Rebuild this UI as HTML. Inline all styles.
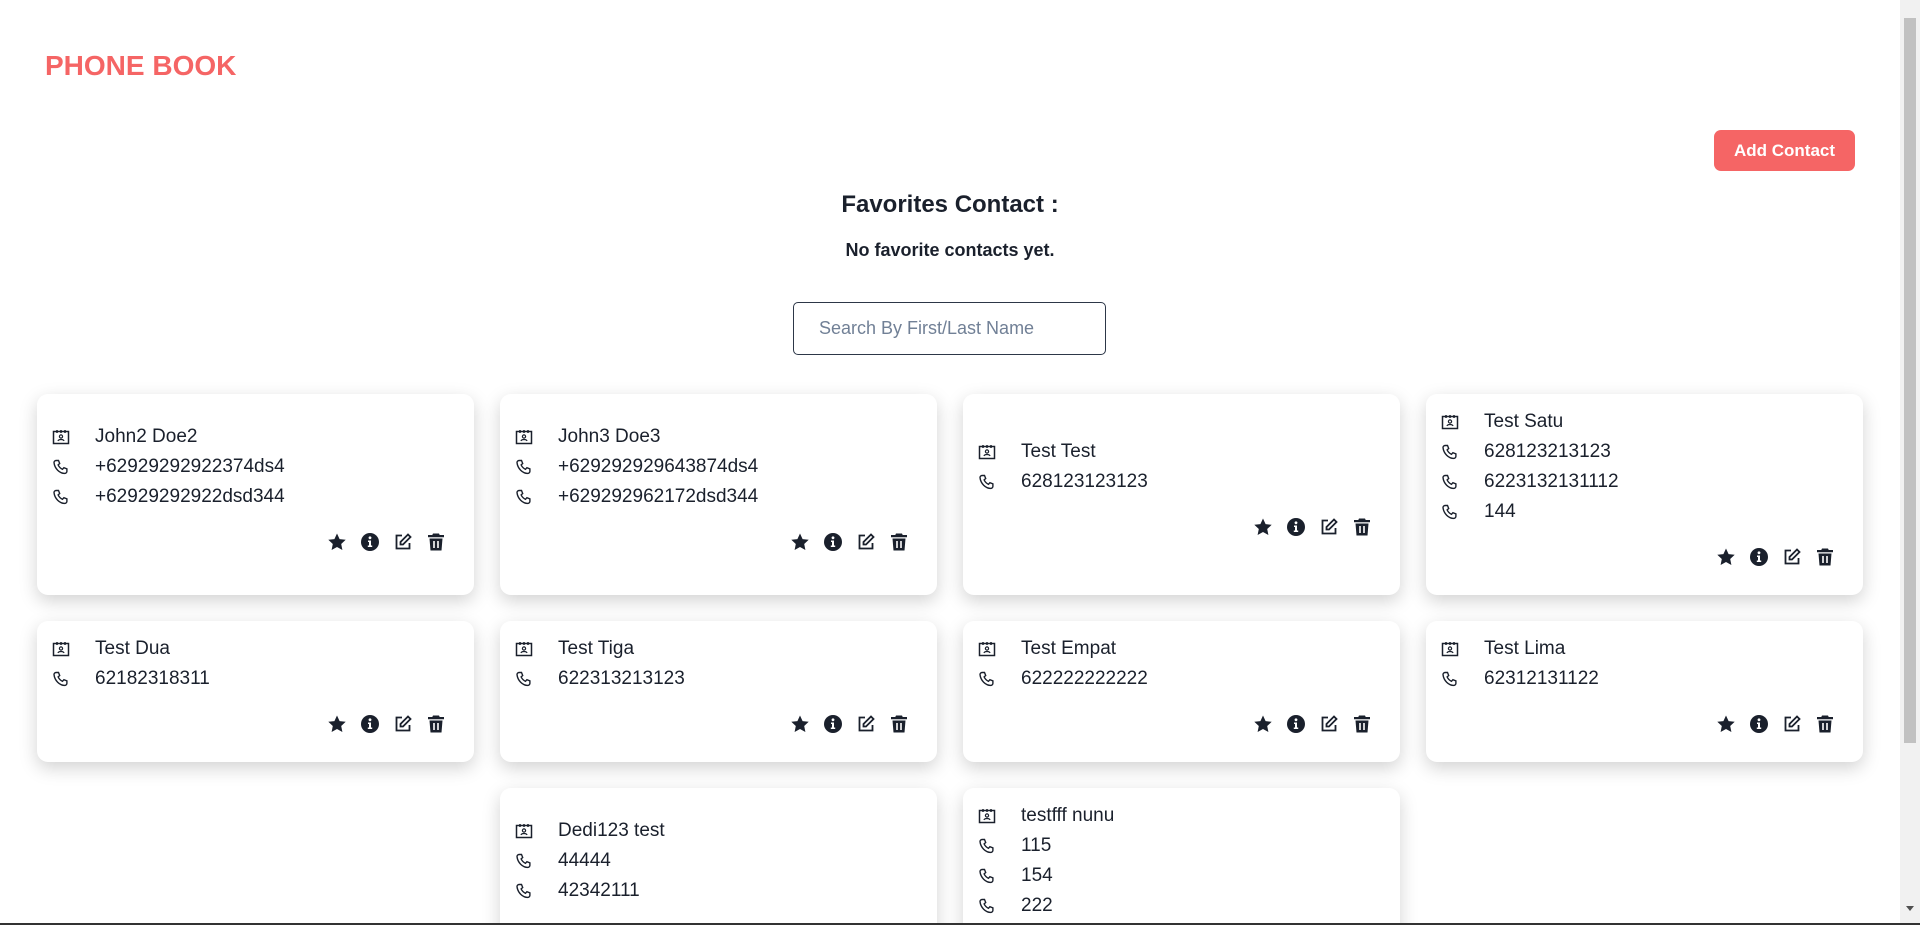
<!DOCTYPE html>
<html><head><meta charset="utf-8"><style>
*{box-sizing:border-box;margin:0;padding:0}
html,body{width:1920px;height:925px;overflow:hidden;background:#fff;font-family:"Liberation Sans",sans-serif;color:#1a202c}
#pg{position:relative;width:1920px;height:925px;overflow:hidden}
.sb{position:absolute;left:1900px;top:0;width:20px;height:925px;background:#f1f1f1;z-index:2}
.sb div{position:absolute;left:4px;top:18px;width:12px;height:725px;background:#c1c1c1}
.sb span{position:absolute;left:6px;top:906px;border-left:4px solid transparent;border-right:4px solid transparent;border-top:5px solid #505050}
.bl{position:absolute;left:0;top:923px;width:1920px;height:2px;background:#333;z-index:3}
h1{position:absolute;left:45px;top:50px;font-size:28px;font-weight:bold;color:#f56565}
.btn{position:absolute;left:1714px;top:130px;width:141px;height:41px;background:#f56565;color:#fff;border-radius:7px;font-size:17px;font-weight:bold;text-align:center;line-height:41px}
.fav{position:absolute;left:0;width:1900px;text-align:center;font-weight:bold}
.search{position:absolute;left:793px;top:302px;width:313px;height:53px;border:1.5px solid #2d3748;border-radius:5px;font-size:18px;color:#718096;padding-left:25px;line-height:50px}
.wrap{position:absolute;left:0;top:394px;width:1900px;display:flex;flex-wrap:wrap;justify-content:center;gap:26px}
.card{width:437px;background:#fff;border-radius:11px;box-shadow:0 6px 18px rgba(0,0,0,.18);padding:13px 28px 13px 15px;display:flex;flex-direction:column;justify-content:center}
.ln{height:30px;display:flex;align-items:center;font-size:19px}
.ln svg{width:18px;height:18px;margin-right:25px;flex:none}
.act{margin-top:18px;margin-bottom:13px;height:24px;display:flex;justify-content:flex-end;gap:13px;align-items:center}
.act svg{width:20px;height:20px}
</style></head><body><div id="pg">
<div class="sb"><div></div><span></span></div>
<div class="bl"></div>
<h1>PHONE BOOK</h1>
<div class="btn">Add Contact</div>
<div class="fav" style="top:191px;font-size:24px">Favorites Contact :</div>
<div class="fav" style="top:240px;font-size:18px">No favorite contacts yet.</div>
<div class="search">Search By First/Last Name</div>
<svg width="0" height="0" style="position:absolute">
<defs>
<symbol id="ci" viewBox="0 0 18 18"><rect x="1.5" y="3.5" width="15" height="12" fill="none" stroke="#1a202c" stroke-width="1.5"/><path d="M5 2v3M9 2v3M13 2v3" stroke="#1a202c" stroke-width="1.5"/><circle cx="9" cy="8.5" r="1.6" fill="none" stroke="#1a202c" stroke-width="1.2"/><path d="M6 13c.5-2 5.5-2 6 0" fill="none" stroke="#1a202c" stroke-width="1.2"/></symbol>
<symbol id="ph" viewBox="0 0 18 18"><path d="M4 2.5l2.5 0 1.2 3-1.6 1.4c.9 2 2.4 3.5 4.4 4.4l1.4-1.6 3 1.2v2.5c0 1-1 2-2 2C7.5 15.4 2.6 10.5 2 4.5c0-1 1-2 2-2z" fill="none" stroke="#1a202c" stroke-width="1.4"/></symbol>
<symbol id="st" viewBox="0 0 20 20"><path d="M10 1.5l2.6 5.6 6.1.7-4.5 4.2 1.2 6L10 15l-5.4 3 1.2-6L1.3 7.8l6.1-.7z" fill="#1a202c"/></symbol>
<symbol id="in" viewBox="0 0 20 20"><circle cx="10" cy="10" r="9" fill="#1a202c"/><circle cx="10" cy="5.8" r="1.4" fill="#fff"/><path d="M8 8.5h3v5h1.2v1.5H7.8v-1.5H9v-3.5H8z" fill="#fff"/></symbol>
<symbol id="ed" viewBox="0 0 20 20"><path d="M9 3.5H3.5v13h13V11" fill="none" stroke="#1a202c" stroke-width="1.8"/><path d="M15 2.5l2.5 2.5-7.5 7.5H7.5V10z" fill="none" stroke="#1a202c" stroke-width="1.8"/></symbol>
<symbol id="tr" viewBox="0 0 20 20"><path d="M7 1.5h6l.7 1.5H18v2.2H2V3h4.3z" fill="#1a202c"/><path d="M3.5 6.5h13l-1 12h-11z" fill="#1a202c"/><path d="M8 9v7M12 9v7" stroke="#fff" stroke-width="1.6"/></symbol>
</defs></svg>
<div class="wrap">
<div class="card"><div class="ln"><svg><use href="#ci"/></svg>John2 Doe2</div><div class="ln"><svg><use href="#ph"/></svg>+62929292922374ds4</div><div class="ln"><svg><use href="#ph"/></svg>+62929292922dsd344</div><div class="act"><svg><use href="#st"/></svg><svg><use href="#in"/></svg><svg><use href="#ed"/></svg><svg><use href="#tr"/></svg></div></div>
<div class="card"><div class="ln"><svg><use href="#ci"/></svg>John3 Doe3</div><div class="ln"><svg><use href="#ph"/></svg>+629292929643874ds4</div><div class="ln"><svg><use href="#ph"/></svg>+629292962172dsd344</div><div class="act"><svg><use href="#st"/></svg><svg><use href="#in"/></svg><svg><use href="#ed"/></svg><svg><use href="#tr"/></svg></div></div>
<div class="card"><div class="ln"><svg><use href="#ci"/></svg>Test Test</div><div class="ln"><svg><use href="#ph"/></svg>628123123123</div><div class="act"><svg><use href="#st"/></svg><svg><use href="#in"/></svg><svg><use href="#ed"/></svg><svg><use href="#tr"/></svg></div></div>
<div class="card"><div class="ln"><svg><use href="#ci"/></svg>Test Satu</div><div class="ln"><svg><use href="#ph"/></svg>628123213123</div><div class="ln"><svg><use href="#ph"/></svg>6223132131112</div><div class="ln"><svg><use href="#ph"/></svg>144</div><div class="act"><svg><use href="#st"/></svg><svg><use href="#in"/></svg><svg><use href="#ed"/></svg><svg><use href="#tr"/></svg></div></div>
<div class="card"><div class="ln"><svg><use href="#ci"/></svg>Test Dua</div><div class="ln"><svg><use href="#ph"/></svg>62182318311</div><div class="act"><svg><use href="#st"/></svg><svg><use href="#in"/></svg><svg><use href="#ed"/></svg><svg><use href="#tr"/></svg></div></div>
<div class="card"><div class="ln"><svg><use href="#ci"/></svg>Test Tiga</div><div class="ln"><svg><use href="#ph"/></svg>622313213123</div><div class="act"><svg><use href="#st"/></svg><svg><use href="#in"/></svg><svg><use href="#ed"/></svg><svg><use href="#tr"/></svg></div></div>
<div class="card"><div class="ln"><svg><use href="#ci"/></svg>Test Empat</div><div class="ln"><svg><use href="#ph"/></svg>622222222222</div><div class="act"><svg><use href="#st"/></svg><svg><use href="#in"/></svg><svg><use href="#ed"/></svg><svg><use href="#tr"/></svg></div></div>
<div class="card"><div class="ln"><svg><use href="#ci"/></svg>Test Lima</div><div class="ln"><svg><use href="#ph"/></svg>62312131122</div><div class="act"><svg><use href="#st"/></svg><svg><use href="#in"/></svg><svg><use href="#ed"/></svg><svg><use href="#tr"/></svg></div></div>
<div class="card"><div class="ln"><svg><use href="#ci"/></svg>Dedi123 test</div><div class="ln"><svg><use href="#ph"/></svg>44444</div><div class="ln"><svg><use href="#ph"/></svg>42342111</div><div class="act"><svg><use href="#st"/></svg><svg><use href="#in"/></svg><svg><use href="#ed"/></svg><svg><use href="#tr"/></svg></div></div>
<div class="card"><div class="ln"><svg><use href="#ci"/></svg>testfff nunu</div><div class="ln"><svg><use href="#ph"/></svg>115</div><div class="ln"><svg><use href="#ph"/></svg>154</div><div class="ln"><svg><use href="#ph"/></svg>222</div><div class="act"><svg><use href="#st"/></svg><svg><use href="#in"/></svg><svg><use href="#ed"/></svg><svg><use href="#tr"/></svg></div></div>
</div>
</div></body></html>
